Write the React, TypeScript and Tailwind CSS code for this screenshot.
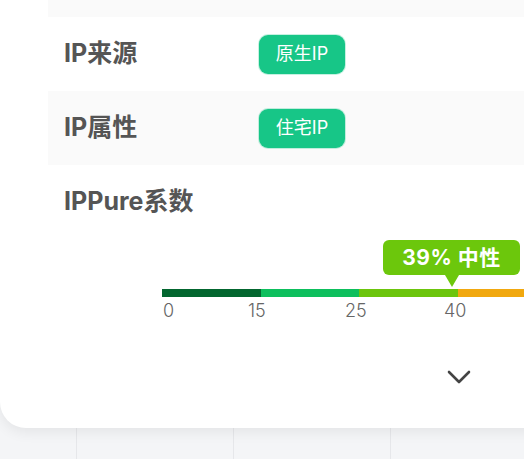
import React from 'react';

const font = { fontFamily: 'Inter, "Noto Sans CJK SC", sans-serif' };

const segments = ['bg-[#03662f]', 'bg-[#0dbf5d]', 'bg-[#6cc50c]', 'bg-[#f1a80f]'];
const ticks = [
    { label: '0', left: 'left-[1px]' },
    { label: '15', left: 'left-[86px]' },
    { label: '25', left: 'left-[183px]' },
    { label: '40', left: 'left-[282px]' },
];

const Badge: React.FC<{ text: string }> = ({ text }) => (
    <span className="inline-flex items-center justify-center w-[86px] h-[39px] rounded-[9px] bg-[#17c687] text-white text-[18px] leading-none shadow-[0_0_0_1px_rgba(23,198,135,0.25)]">
        {text}
    </span>
);

const Row: React.FC<{ label: string; shaded?: boolean; children?: React.ReactNode }> = ({ label, shaded, children }) => (
    <div className={`flex items-center h-[74px] pl-4 ${shaded ? 'bg-[#fafafa]' : 'bg-white'}`}>
        <div className="w-[195px] text-[25px] font-bold text-[#555]">{label}</div>
        {children}
    </div>
);

const App: React.FC = () => {
    return (
        <div className="w-[524px] h-[459px] overflow-hidden bg-[#f4f5f7] flex flex-col" style={font}>
            <div className="w-[580px] h-[428px] shrink-0 bg-white rounded-bl-[26px] shadow-[0_4px_14px_rgba(0,0,0,0.07)] pl-12 flex flex-col relative z-10">
                <div className="h-[17px] bg-[#fafafa]" />
                <Row label="IP来源">
                    <Badge text="原生IP" />
                </Row>
                <Row label="IP属性" shaded>
                    <Badge text="住宅IP" />
                </Row>
                <div className="pl-4 pt-[18px]">
                    <div className="text-[25px] font-bold text-[#555] leading-[36px]">IPPure系数</div>
                    <div className="relative ml-[98px] mt-[70px] h-[40px]">
                        <div className="flex h-[8px]">
                            {segments.map((c) => (
                                <div key={c} className={`w-[98.5px] shrink-0 ${c}`} />
                            ))}
                        </div>
                        {ticks.map((t) => (
                            <span key={t.label} className={`absolute top-[12px] text-[18px] leading-[20px] font-light text-[#666] ${t.left}`}>
                                {t.label}
                            </span>
                        ))}
                        <div className="absolute left-[221px] top-[-49px] flex flex-col items-start">
                            <div className="w-[137px] h-[35px] rounded-[6px] bg-[#6cc70c] text-white text-[21px] font-bold flex items-center justify-center tracking-[0.5px]">
                                39% 中性
                            </div>
                            <div className="w-0 h-0 border-l-[7px] border-r-[7px] border-t-[12px] border-l-transparent border-r-transparent border-t-[#6cc70c] ml-[62px]" />
                        </div>
                    </div>
                    <div className="flex pl-[383px] pt-[40px]">
                        <svg width="24" height="16" viewBox="0 0 24 16" fill="none">
                            <polyline points="2,3 12,13 22,3" stroke="#444" strokeWidth="2.6" strokeLinecap="round" strokeLinejoin="round" />
                        </svg>
                    </div>
                </div>
            </div>
            <div className="flex flex-1">
                <div className="w-[77px] border-r border-[#e6e7ea]" />
                <div className="w-[157px] border-r border-[#e6e7ea]" />
                <div className="w-[157px] border-r border-[#e6e7ea]" />
                <div className="flex-1" />
            </div>
        </div>
    );
};

export default App;
